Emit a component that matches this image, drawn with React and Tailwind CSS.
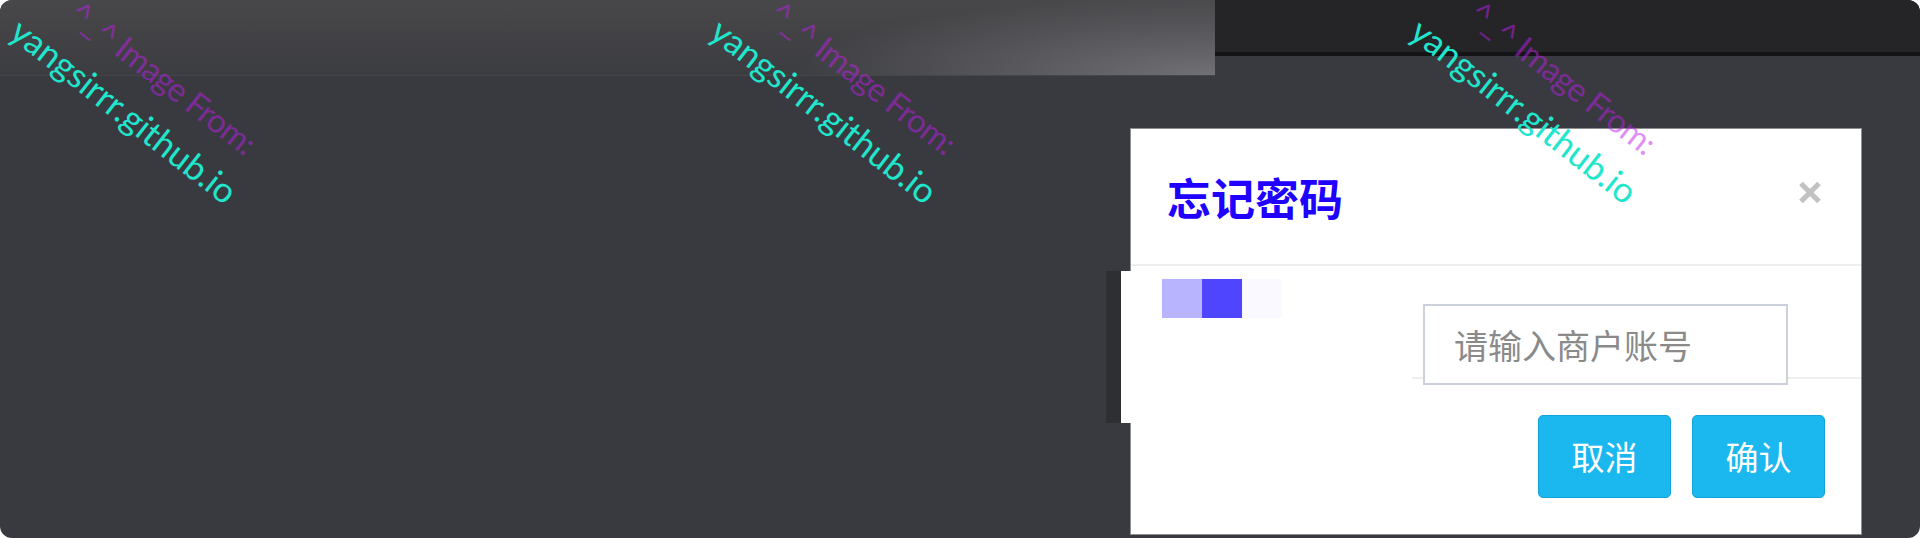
import React from "react";

function Watermark({ left }) {
  return (
    <div
      className={`pointer-events-none absolute top-[-39px] ${left} w-[300px] origin-top-left rotate-[38deg] whitespace-nowrap text-center font-['Lato',sans-serif] leading-[48px]`}
    >
      <div className="-translate-y-[2px] pl-[20px] text-[33px] tracking-[-1px] text-[#be1eea]/50">^_^ Image From:</div>
      <div className="text-[35px] text-[#1fe6cc]">yangsirrr.github.io</div>
    </div>
  );
}

export default function App() {
  return (
    <div className="w-[1920px] h-[538px] bg-white">
      <div className="relative w-full h-full overflow-hidden rounded-[12px] bg-[#393a3f] font-['Noto_Sans_CJK_SC','Noto_Sans',sans-serif]">
        <div className="flex items-start">
          <div className="w-[1215px] h-[76px] border-b border-[#45454a] bg-[image:radial-gradient(ellipse_420px_80px_at_100%_100%,rgba(116,115,120,0.95),rgba(116,115,120,0)),linear-gradient(to_bottom,#48474a,#3c3d41)]" />
          <div className="flex-1 h-[56px] bg-[#252528] border-b-4 border-[#141416]" />
        </div>

        <div className="relative ml-[1130px] mt-[52px] w-[732px] h-[407px] bg-white border border-[#8e8e8e]">
          <div className="absolute left-[-25px] top-[142px] w-[16px] h-[152px] bg-[#2e2f33]" />
          <div className="absolute left-[-10px] top-[142px] w-[11px] h-[152px] bg-white" />

          <div className="flex h-[137px] items-center justify-between border-b-2 border-[#efefef] pl-[36px] pr-[39px]">
            <div className="text-[44px] font-bold leading-none text-[#2000ff]">忘记密码</div>
            <svg width="24" height="23" viewBox="0 0 24 23" className="-mt-[8px]">
              <path d="M3 2.5 L21 20.5 M21 2.5 L3 20.5" stroke="#c2c2c2" strokeWidth="5.2" strokeLinecap="butt" />
            </svg>
          </div>

          <div className="relative">
            <div className="absolute left-[281px] right-0 top-[111px] h-[2px] bg-[#efefef]" />
            <div className="flex items-start pl-[31px] pt-[13px]">
              <div className="flex">
                <div className="w-[40px] h-[39px] bg-[#b8b5fe]" />
                <div className="w-[40px] h-[39px] bg-[#5045fe]" />
                <div className="w-[40px] h-[39px] bg-[#f9f9ff]" />
              </div>
              <div className="relative z-10 ml-[141px] mt-[25px] flex h-[81px] w-[365px] items-center border-2 border-[#cbd0dc] bg-white pl-[29px] text-[34px] leading-none text-[#8a8a8a]">
                请输入商户账号
              </div>
            </div>
            <div className="mt-[30px] flex justify-end gap-[21px] pr-[36px]">
              <button className="flex h-[83px] w-[133px] items-center justify-center rounded-[5px] border border-[#15a4d9] bg-[#1bb7ef] text-[33px] leading-none text-white">
                取消
              </button>
              <button className="flex h-[83px] w-[133px] items-center justify-center rounded-[5px] border border-[#15a4d9] bg-[#1bb7ef] text-[33px] leading-none text-white">
                确认
              </button>
            </div>
          </div>
        </div>

        <Watermark left="left-[51px]" />
        <Watermark left="left-[751px]" />
        <Watermark left="left-[1451px]" />
      </div>
    </div>
  );
}
